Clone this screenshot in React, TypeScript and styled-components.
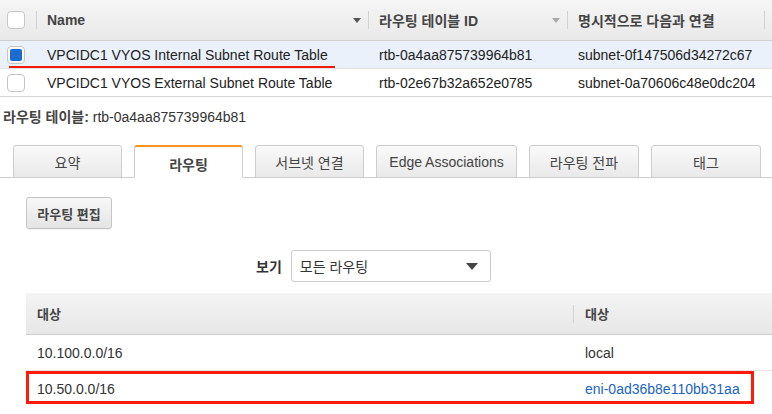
import styled, { createGlobalStyle } from "styled-components"

const GlobalStyle = createGlobalStyle`
	html, body {
		margin: 0;
		padding: 0;
		background: #fff;
	}
	body {
		font-family: "Liberation Sans", "Noto Sans CJK KR", Arial, sans-serif;
		color: #333;
		-webkit-font-smoothing: antialiased;
	}
`

const tableRows = [
	{ name: "VPCIDC1 VYOS Internal Subnet Route Table", id: "rtb-0a4aa875739964b81", subnet: "subnet-0f147506d34272c67", selected: true },
	{ name: "VPCIDC1 VYOS External Subnet Route Table", id: "rtb-02e67b32a652e0785", subnet: "subnet-0a70606c48e0dc204", selected: false },
]

const tabs = [
	{ label: "요약", width: 109 },
	{ label: "라우팅", width: 109, active: true },
	{ label: "서브넷 연결", width: 109 },
	{ label: "Edge Associations", width: 141 },
	{ label: "라우팅 전파", width: 110 },
	{ label: "태그", width: 110 },
]

const routes = [
	{ dest: "10.100.0.0/16", target: "local" },
	{ dest: "10.50.0.0/16", target: "eni-0ad36b8e110bb31aa", link: true, marked: true },
]

const SortArrow = ({ light }: { light?: boolean }) => (
	<svg width="8" height="5" viewBox="0 0 8 5">
		<path d="M0 0 L8 0 L4 5 Z" fill={light ? "#a8a8a8" : "#555"} />
	</svg>
)

const App = () => {
	return (
		<Page>
			<GlobalStyle />
			<Grid>
				<HeadRow>
					<CheckCell><Check /></CheckCell>
					<HeadCell><Sep /><HeadLabel>Name</HeadLabel><SortArrow /></HeadCell>
					<HeadCell><Sep /><HeadLabel>라우팅 테이블 ID</HeadLabel><SortArrow light /></HeadCell>
					<HeadCell><Sep /><HeadLabel>명시적으로 다음과 연결</HeadLabel><Sep /></HeadCell>
				</HeadRow>
				{tableRows.map((r) => (
					<BodyRow key={r.id} $selected={r.selected}>
						<CheckCell><Check $checked={r.selected} /></CheckCell>
						<Cell $pad={11}>{r.name}</Cell>
						<Cell>{r.id}</Cell>
						<Cell>{r.subnet}</Cell>
						{r.selected && <Underline />}
					</BodyRow>
				))}
			</Grid>

			<Caption><strong>라우팅 테이블:</strong> rtb-0a4aa875739964b81</Caption>

			<TabBar>
				{tabs.map((t) => (
					<Tab key={t.label} $active={t.active} style={{ width: t.width }}>{t.label}</Tab>
				))}
			</TabBar>

			<Panel>
				<Button>라우팅 편집</Button>
				<FilterRow>
					<FilterLabel>보기</FilterLabel>
					<Select>
						<span>모든 라우팅</span>
						<svg width="12" height="7" viewBox="0 0 12 7">
							<path d="M0 0 L12 0 L6 7 Z" fill="#444" />
						</svg>
					</Select>
				</FilterRow>
				<RouteTable>
					<RouteHead>
						<RouteHeadCell>대상</RouteHeadCell>
						<RouteHeadCell><Sep /><span>대상</span></RouteHeadCell>
					</RouteHead>
					{routes.map((r) => (
						<RouteRow key={r.dest}>
							<RouteCell>{r.dest}</RouteCell>
							<RouteCell $link={r.link}>{r.target}</RouteCell>
							{r.marked && <Marker />}
						</RouteRow>
					))}
				</RouteTable>
			</Panel>
		</Page>
	)
}

export default App

const Page = styled.div`
	width: 772px;
	height: 414px;
	overflow: hidden;
`

const Grid = styled.div`
	border-bottom: 1px solid #d5d5d5;
`

const Columns = styled.div`
	display: grid;
	grid-template-columns: 36px 332px 199px 1fr;
	position: relative;
`

const HeadRow = styled(Columns)`
	height: 40px;
	background: linear-gradient(#f5f5f5, #e9e9e9);
	border-bottom: 1px solid #cfcfcf;
	font-weight: bold;
	font-size: 14px;
	color: #444;
`

const BodyRow = styled(Columns)<{ $selected?: boolean }>`
	height: 27px;
	background: ${(p) => (p.$selected ? "#eaf1fb" : "#fff")};
	font-size: 14px;
	color: #222;
	& + & {
		border-top: 1px solid #e2e2e2;
	}
`

const CheckCell = styled.div`
	display: flex;
	align-items: center;
	padding-left: 7px;
`

const Check = styled.span<{ $checked?: boolean }>`
	width: 18px;
	height: 18px;
	box-sizing: border-box;
	border: 1px solid #c6c6c6;
	border-radius: 4px;
	background: #fff;
	display: flex;
	align-items: center;
	justify-content: center;
	&::after {
		content: "";
		display: ${(p) => (p.$checked ? "block" : "none")};
		width: 12px;
		height: 12px;
		border-radius: 2px;
		background: #1b6bd1;
	}
`

const HeadCell = styled.div`
	display: flex;
	align-items: center;
	padding-right: 7px;
`

const HeadLabel = styled.span`
	flex: 1;
	padding-left: 10px;
`

const Sep = styled.span`
	width: 1px;
	height: 18px;
	background: #d2d2d2;
	flex-shrink: 0;
`

const Cell = styled.div<{ $pad?: number }>`
	display: flex;
	align-items: center;
	padding-left: ${(p) => p.$pad ?? 11}px;
	white-space: nowrap;
`

const Underline = styled.span`
	position: absolute;
	left: 9px;
	top: 25px;
	width: 326px;
	height: 2px;
	background: #f21b0c;
`

const Caption = styled.div`
	padding: 12px 3px 0;
	font-size: 14px;
	color: #333;
	height: 24px;
	line-height: 17px;
	strong {
		color: #444;
	}
`

const TabBar = styled.div`
	display: flex;
	gap: 12px;
	padding: 12px 0 0 13px;
	border-bottom: 1px solid #cdcdcd;
	align-items: flex-end;
`

const Tab = styled.div<{ $active?: boolean }>`
	box-sizing: border-box;
	height: 33px;
	margin-bottom: -1px;
	display: flex;
	align-items: center;
	justify-content: center;
	font-size: 14px;
	color: #444;
	border: 1px solid #cdcdcd;
	border-radius: 3px 3px 0 0;
	background: ${(p) => (p.$active ? "#fff" : "linear-gradient(#fafafa, #e9e9e9)")};
	border-top: ${(p) => (p.$active ? "2px solid #f7931e" : "1px solid #cdcdcd")};
	border-bottom: ${(p) => (p.$active ? "1px solid #fff" : "1px solid #cdcdcd")};
	font-weight: ${(p) => (p.$active ? "bold" : "normal")};
	padding-top: ${(p) => (p.$active ? "4px" : "0")};
`

const Panel = styled.div`
	padding: 19px 0 0 26px;
`

const Button = styled.button`
	display: block;
	width: 86px;
	height: 32px;
	padding: 0;
	border: 1px solid #c4c4c4;
	border-radius: 3px;
	background: linear-gradient(#f8f8f8, #e4e4e4);
	font-family: inherit;
	font-weight: bold;
	font-size: 13px;
	color: #444;
	box-shadow: 0 1px 0 rgba(0, 0, 0, 0.05);
`

const FilterRow = styled.div`
	display: flex;
	align-items: center;
	gap: 9px;
	margin: 21px 0 11px 230px;
`

const FilterLabel = styled.span`
	font-weight: bold;
	font-size: 14px;
	color: #333;
`

const Select = styled.div`
	box-sizing: border-box;
	width: 200px;
	height: 32px;
	border: 1px solid #cbcbcb;
	border-radius: 3px;
	display: flex;
	align-items: center;
	justify-content: space-between;
	padding: 0 12px 0 8px;
	font-size: 14px;
	color: #333;
`

const RouteTable = styled.div`
	position: relative;
`

const RouteCols = styled.div`
	display: grid;
	grid-template-columns: 547px 1fr;
	position: relative;
`

const RouteHead = styled(RouteCols)`
	height: 41px;
	background: linear-gradient(#f4f4f4, #e7e7e7);
	border-bottom: 1px solid #cdcdcd;
	font-weight: bold;
	font-size: 13px;
	color: #444;
`

const RouteHeadCell = styled.div`
	display: flex;
	align-items: center;
	gap: 11px;
	padding-left: 11px;
	&:last-child {
		padding-left: 0;
	}
`

const RouteRow = styled(RouteCols)`
	height: 35px;
	font-size: 14px;
	color: #333;
	& + & {
		border-top: 1px solid #e6e6e6;
	}
`

const RouteCell = styled.div<{ $link?: boolean }>`
	display: flex;
	align-items: center;
	padding-left: 11px;
	color: ${(p) => (p.$link ? "#1a64c2" : "#333")};
	&:nth-child(2) {
		padding-left: 12px;
	}
`

const Marker = styled.span`
	position: absolute;
	left: 0;
	top: 0;
	width: 728px;
	height: 33px;
	box-sizing: border-box;
	border: 3px solid #ff1a0a;
`
